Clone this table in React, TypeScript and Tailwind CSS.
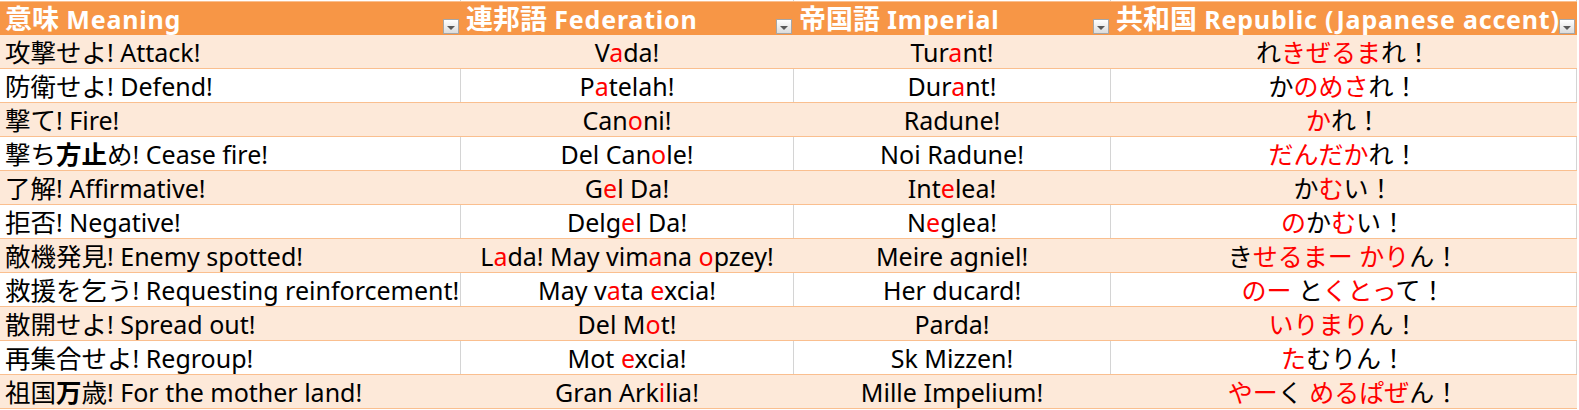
import React from "react";

const rows: string[][] = [
  ["攻撃せよ! Attack!", "V{a}da!", "Tur{a}nt!", "れ{きぜるま}れ！"],
  ["防衛せよ! Defend!", "P{a}telah!", "Dur{a}nt!", "か{のめさ}れ！"],
  ["撃て! Fire!", "Can{o}ni!", "Radune!", "{か}れ！"],
  ["撃ち<方止>め! Cease fire!", "Del Can{o}le!", "Noi Radune!", "{だんだか}れ！"],
  ["了解! Affirmative!", "G{e}l Da!", "Int{e}lea!", "か{む}い！"],
  ["拒否! Negative!", "Delg{e}l Da!", "N{e}glea!", "{の}か{む}い！"],
  ["敵機発見! Enemy spotted!", "L{a}da! May vim{a}na {o}pzey!", "Meire agniel!", "き{せるまー かり}ん！"],
  ["救援を乞う! Requesting reinforcement!", "May v{a}ta {e}xcia!", "Her ducard!", "{のー} と{くとっ}て！"],
  ["散開せよ! Spread out!", "Del M{o}t!", "Parda!", "{いりまり}ん！"],
  ["再集合せよ! Regroup!", "Mot {e}xcia!", "Sk Mizzen!", "{た}むりん！"],
  ["祖国<万>歳! For the mother land!", "Gran Ark{i}lia!", "Mille Impelium!", "{やー}く {めるぱぜ}ん！"],
];

const CJK = /[\u3000-\u30ff\u4e00-\u9fff\uff00-\uffef]/;

function splitScript(s: string): { t: string; cjk: boolean }[] {
  const out: { t: string; cjk: boolean }[] = [];
  for (const ch of s) {
    const c = CJK.test(ch);
    const last = out[out.length - 1];
    if (last && last.cjk === c) last.t += ch;
    else out.push({ t: ch, cjk: c });
  }
  return out;
}

function Rich({ text, cjkClass = "", latinClass = "" }: { text: string; cjkClass?: string; latinClass?: string }) {
  const segs: { t: string; mode: "n" | "r" | "b" }[] = [];
  let buf = "";
  let mode: "n" | "r" | "b" = "n";
  const flush = () => {
    if (buf) segs.push({ t: buf, mode });
    buf = "";
  };
  for (const ch of text) {
    if (ch === "{") { flush(); mode = "r"; }
    else if (ch === "<") { flush(); mode = "b"; }
    else if (ch === "}" || ch === ">") { flush(); mode = "n"; }
    else buf += ch;
  }
  flush();
  const parts: React.ReactNode[] = [];
  let key = 0;
  segs.forEach((s) => {
    const modeCls = s.mode === "r" ? "text-[#ff0000]" : s.mode === "b" ? "font-bold" : "";
    splitScript(s.t).forEach((run) => {
      parts.push(
        <span key={key++} className={`${modeCls} ${run.cjk ? cjkClass : latinClass}`}>
          {run.t}
        </span>
      );
    });
  });
  return <>{parts}</>;
}

function Drop() {
  return (
    <div className="shrink-0 w-[16px] h-[15px] mb-[1px] border border-[#a6a6a6] bg-gradient-to-b from-[#ffffff] to-[#dcdcdc] flex items-end justify-center pb-[3px]">
      <div className="w-0 h-0 border-l-[4px] border-r-[4px] border-t-[4px] border-l-transparent border-r-transparent border-t-[#595959]" />
    </div>
  );
}

const widths = ["w-[461px]", "w-[333px]", "w-[317px]", "w-[466px]"];
const headers = ["意味 Meaning", "連邦語 Federation", "帝国語 Imperial", "共和国 Republic (Japanese accent)"];

export default function App() {
  return (
    <div
      className="w-[1579px] h-[410px] bg-white overflow-hidden text-black"
      style={{ fontFamily: '"Noto Sans", "Noto Sans CJK JP", sans-serif' }}
    >
      {/* top sliver of previous row */}
      <div className="flex h-[1px]">
        {widths.map((w, i) => (
          <div key={i} className={`${w} border-r border-[#d4d4d4]`} />
        ))}
      </div>
      <div className="w-[1577px] h-[1px] bg-[#fabf8f]" />
      {/* header */}
      <div className="flex h-[33px] w-[1577px] bg-[#f79646]">
        {headers.map((h, i) => (
          <div key={i} className={`${widths[i]} flex items-end pr-[1px] pl-[5px] border-r border-[#f79646]`}>
            <span className="flex-1 min-w-0 whitespace-nowrap overflow-visible text-white font-bold text-[25px] leading-[32px]">
              <Rich text={h} cjkClass="text-[27px]" latinClass="tracking-[0.8px]" />
            </span>
            <Drop />
          </div>
        ))}
      </div>
      {rows.map((r, ri) => {
        const odd = ri % 2 === 0;
        return (
          <div
            key={ri}
            className={`flex h-[34px] w-[1577px] border-b border-[#fabf8f] ${odd ? "bg-[#fde9d9]" : "bg-white"}`}
          >
            {r.map((c, ci) => (
              <div
                key={ci}
                className={`${widths[ci]} flex items-center ${ci === 0 ? "justify-start pl-[5px]" : "justify-center"} border-r ${odd ? "border-[#fde9d9]" : "border-[#d4d4d4]"} whitespace-nowrap text-[25px] leading-[33px] pt-[2px]`}
              >
                <span>
                  <Rich text={c} cjkClass={ci === 0 ? "text-[25.5px]" : ""} />
                </span>
              </div>
            ))}
          </div>
        );
      })}
    </div>
  );
}
